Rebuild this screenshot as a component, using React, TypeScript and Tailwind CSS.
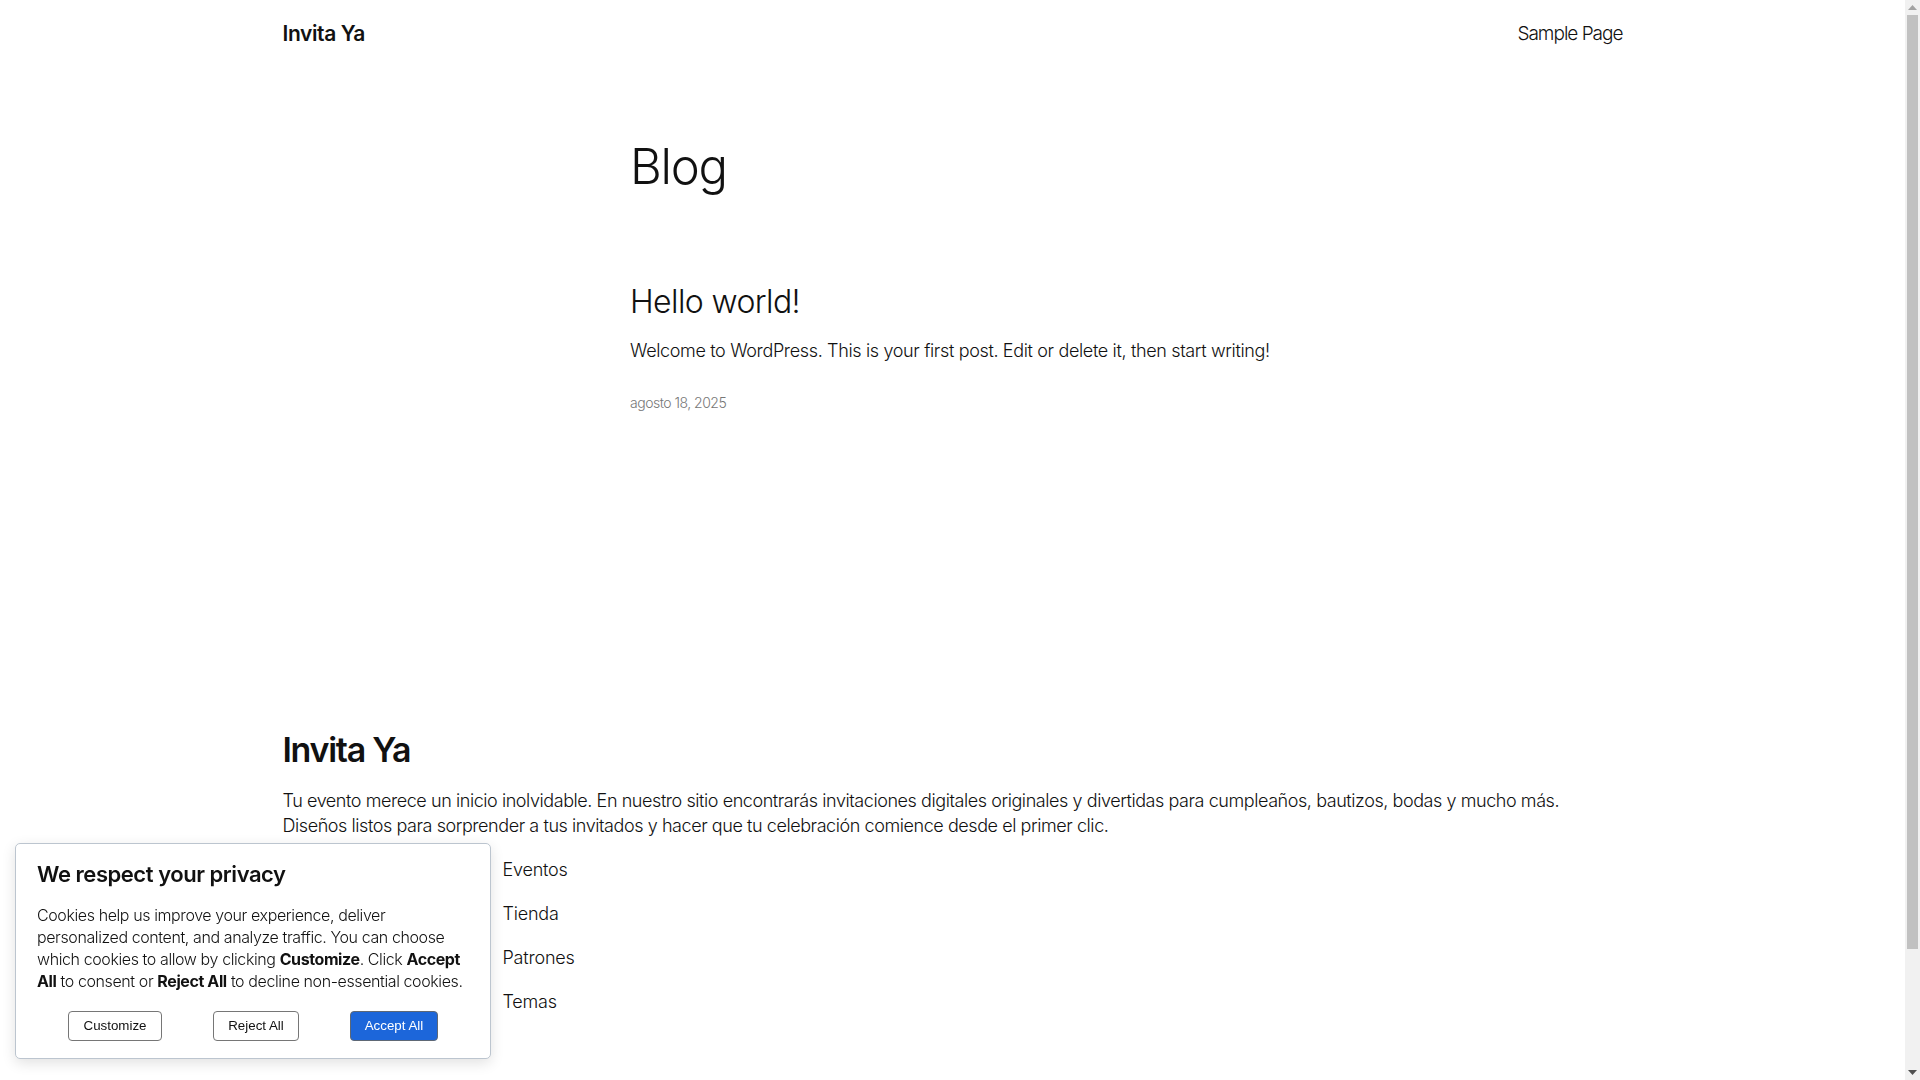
import React from "react";

const footerLinks = ["Eventos", "Tienda", "Patrones", "Temas"];

function Scrollbar() {
  return (
    <div className="fixed top-0 right-0 w-[15px] h-screen bg-[#f1f1f1] flex flex-col items-center">
      <div className="h-[15px] flex items-center justify-center">
        <svg width="9" height="5" viewBox="0 0 9 5">
          <path d="M0 5 L4.5 0 L9 5 Z" fill="#a3a3a3" />
        </svg>
      </div>
      <div className="w-[11px] h-[934px] bg-[#c1c1c1]" />
      <div className="flex-1" />
      <div className="h-[15px] flex items-center justify-center">
        <svg width="9" height="5" viewBox="0 0 9 5">
          <path d="M0 0 L9 0 L4.5 5 Z" fill="#505050" />
        </svg>
      </div>
    </div>
  );
}

function CookieBanner() {
  return (
    <div className="fixed left-[15px] bottom-[21px] w-[476px] h-[216px] bg-white border border-[#bcc5cf] rounded-[5px] shadow-[0_4px_14px_rgba(0,0,0,0.12)] px-[21px] pt-[15px]">
      <h2 className="text-[22px] leading-[30px] font-semibold text-[#111] tracking-[-0.45px]">We respect your privacy</h2>
      <p className="mt-[15px] text-[16px] leading-[22px] font-light text-[#111] tracking-[-0.4px]">
        Cookies help us improve your experience, deliver personalized content, and analyze traffic. You can choose
        which cookies to allow by clicking <strong className="font-bold">Customize</strong>. Click{" "}
        <strong className="font-bold">Accept All</strong> to consent or <strong className="font-bold">Reject All</strong>{" "}
        to decline non-essential cookies.
      </p>
      <div className="mt-[19px] flex justify-center gap-[51px] font-['Liberation_Sans',Arial,sans-serif] text-[13.33px]">
        <button className="h-[30px] w-[94px] rounded-[4px] border border-[#767676] bg-white text-[#111]">Customize</button>
        <button className="h-[30px] w-[86px] rounded-[4px] border border-[#767676] bg-white text-[#111]">Reject All</button>
        <button className="h-[30px] w-[88px] rounded-[4px] border border-[#5e6875] bg-[#1c66da] text-white">Accept All</button>
      </div>
    </div>
  );
}

export default function App() {
  return (
    <div className="min-h-screen bg-white text-[#111] pr-[15px] font-['Inter','Noto_Sans',sans-serif]">
      <header className="max-w-[1340px] mx-auto h-[68px] flex items-center justify-between">
        <a className="text-[21px] font-semibold tracking-[-0.4px]">Invita Ya</a>
        <nav>
          <a className="text-[19px] font-light tracking-[-1px]">Sample Page</a>
        </nav>
      </header>

      <main className="w-[645px] mx-auto pt-[70px]">
        <h1 className="text-[49px] leading-[58px] font-light tracking-[-1.3px]">Blog</h1>
        <article className="mt-[88px]">
          <h2 className="text-[32px] leading-[36px] font-light tracking-[-0.6px]">Hello world!</h2>
          <p className="mt-[17px] text-[18px] leading-[27px] font-light tracking-[-0.35px]">
            Welcome to WordPress. This is your first post. Edit or delete it, then start writing!
          </p>
          <p className="mt-[28px] text-[14px] leading-[21px] font-light text-[#777] tracking-[-0.5px]">agosto 18, 2025</p>
        </article>
      </main>

      <footer className="max-w-[1340px] mx-auto mt-[316px] pb-[200px]">
        <h2 className="text-[34px] leading-[41px] font-semibold tracking-[-1.3px]">Invita Ya</h2>
        <p className="mt-[18px] text-[18px] leading-[25px] font-light tracking-[-0.43px] max-w-[1310px]">
          Tu evento merece un inicio inolvidable. En nuestro sitio encontrarás invitaciones digitales originales y divertidas
          para cumpleaños, bautizos, bodas y mucho más. Diseños listos para sorprender a tus invitados y hacer que tu
          celebración comience desde el primer clic.
        </p>
        <div className="mt-[18px] pl-[220px]">
          <ul className="flex flex-col gap-[17px]">
            {footerLinks.map((l) => (
              <li key={l} className="text-[18px] leading-[27px] font-light tracking-[-0.2px]">{l}</li>
            ))}
          </ul>
        </div>
      </footer>

      <CookieBanner />
      <Scrollbar />
    </div>
  );
}
